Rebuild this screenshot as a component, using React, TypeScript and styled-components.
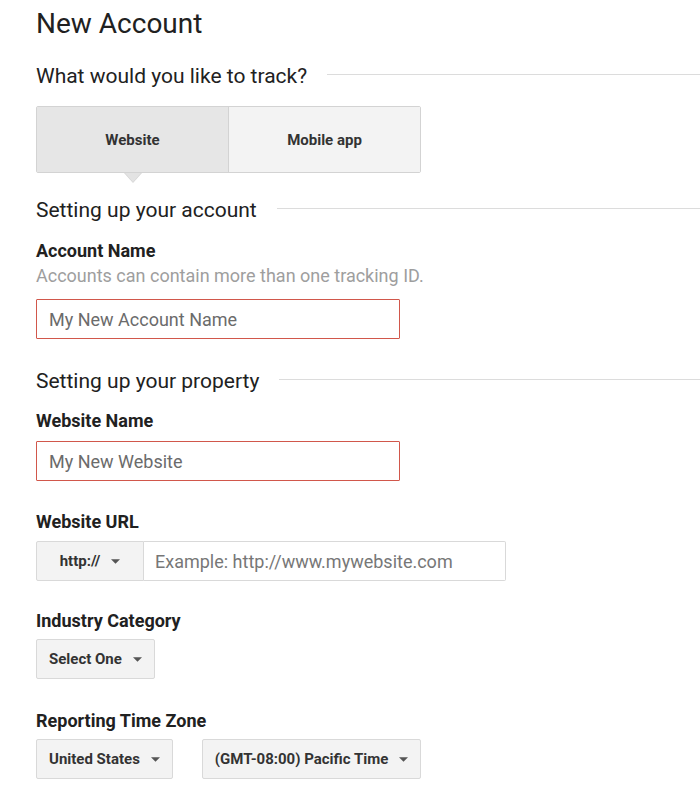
import React from "react";
import styled, { createGlobalStyle } from "styled-components";

const GlobalStyle = createGlobalStyle`
  html, body {
    margin: 0;
    padding: 0;
    background: #ffffff;
  }
  body {
    font-family: Roboto, "Liberation Sans", Arial, sans-serif;
    color: #212121;
  }
  * {
    box-sizing: border-box;
  }
`;

const Caret = () => (
  <CaretIcon viewBox="0 0 10 5" aria-hidden="true">
    <path d="M0 0 L10 0 L5 5 Z" fill="currentColor" />
  </CaretIcon>
);

const App: React.FC = () => {
  return (
    <>
      <GlobalStyle />
      <Page>
        <Title>New Account</Title>

        <SectionHeading $top={24}>
          <span>What would you like to track?</span>
          <Rule />
        </SectionHeading>

        <Toggle>
          <ToggleOption $active>Website</ToggleOption>
          <ToggleOption>Mobile app</ToggleOption>
        </Toggle>

        <SectionHeading $top={25}>
          <span>Setting up your account</span>
          <Rule />
        </SectionHeading>

        <Field $top={19}>
          <Label>Account Name</Label>
          <Help>Accounts can contain more than one tracking ID.</Help>
          <TextInput $invalid placeholder="My New Account Name" $top={13} />
        </Field>

        <SectionHeading $top={30}>
          <span>Setting up your property</span>
          <Rule />
        </SectionHeading>

        <Field $top={18}>
          <Label>Website Name</Label>
          <TextInput $invalid placeholder="My New Website" $top={10} />
        </Field>

        <Field $top={31}>
          <Label>Website URL</Label>
          <UrlGroup>
            <Select $width={108} $center $joined>
              <span>http://</span>
              <Caret />
            </Select>
            <UrlInput placeholder="Example: http://www.mywebsite.com" />
          </UrlGroup>
        </Field>

        <Field $top={30}>
          <Label>Industry Category</Label>
          <Row>
            <Select>
              <span>Select One</span>
              <Caret />
            </Select>
          </Row>
        </Field>

        <Field $top={32}>
          <Label>Reporting Time Zone</Label>
          <Row>
            <Select>
              <span>United States</span>
              <Caret />
            </Select>
            <Select>
              <span>(GMT-08:00) Pacific Time</span>
              <Caret />
            </Select>
          </Row>
        </Field>
      </Page>
    </>
  );
};

const Page = styled.div`
  padding: 8px 0 16px 36px;
  display: flex;
  flex-direction: column;
  align-items: flex-start;
`;

const Title = styled.h1`
  margin: 0;
  font-size: 28px;
  line-height: 32px;
  font-weight: 400;
  color: #212121;
`;

const SectionHeading = styled.h2<{ $top: number }>`
  margin: ${(p) => p.$top}px 0 0 0;
  width: 100%;
  display: flex;
  align-items: center;
  gap: 20px;
  font-size: 21px;
  line-height: 24px;
  font-weight: 400;
  color: #212121;
  white-space: nowrap;
`;

const Rule = styled.div`
  flex: 1;
  height: 1px;
  margin-top: -3px;
  background: #dcdcdc;
`;

const Toggle = styled.div`
  margin-top: 18px;
  display: flex;
  border: 1px solid #d3d3d3;
  border-radius: 2px;
`;

const ToggleOption = styled.div<{ $active?: boolean }>`
  position: relative;
  width: ${(p) => (p.$active ? 192 : 191)}px;
  height: 65px;
  display: flex;
  align-items: center;
  justify-content: center;
  font-size: 15px;
  font-weight: 700;
  color: #333;
  background: ${(p) => (p.$active ? "#e6e6e6" : "#f3f3f3")};
  border-right: ${(p) => (p.$active ? "1px solid #d3d3d3" : "none")};

  ${(p) =>
    p.$active &&
    `
    &::after {
      content: "";
      position: absolute;
      left: 50%;
      bottom: -10px;
      margin-left: -8px;
      border-left: 8px solid transparent;
      border-right: 8px solid transparent;
      border-top: 9px solid #e3e3e3;
    }
    &::before {
      content: "";
      position: absolute;
      left: 50%;
      bottom: -11px;
      margin-left: -9px;
      border-left: 9px solid transparent;
      border-right: 9px solid transparent;
      border-top: 10px solid #d6d6d6;
    }
  `}
`;

const Field = styled.div<{ $top: number }>`
  margin-top: ${(p) => p.$top}px;
  display: flex;
  flex-direction: column;
  align-items: flex-start;
`;

const Label = styled.div`
  font-size: 18px;
  line-height: 20px;
  font-weight: 700;
  color: #212121;
`;

const Help = styled.div`
  margin-top: 5px;
  font-size: 18px;
  line-height: 20px;
  color: #9e9e9e;
`;

const TextInput = styled.input<{ $invalid?: boolean; $top: number }>`
  margin-top: ${(p) => p.$top}px;
  width: 364px;
  height: 40px;
  padding: 0 12px;
  font-family: Roboto, "Liberation Sans", Arial, sans-serif;
  font-size: 18px;
  color: #333;
  background: #fff;
  border: 1.5px solid ${(p) => (p.$invalid ? "#d1574b" : "#d0d0d0")};
  border-radius: 1px;
  outline: none;

  &::placeholder {
    color: #6b6b6b;
  }
`;

const UrlGroup = styled.div`
  margin-top: 9px;
  display: flex;
`;

const Row = styled.div`
  margin-top: 8px;
  display: flex;
  gap: 29px;
`;

const Select = styled.div<{ $width?: number; $center?: boolean; $joined?: boolean }>`
  height: 40px;
  ${(p) => (p.$width ? `width: ${p.$width}px;` : "")}
  padding: 0 12px;
  display: flex;
  align-items: center;
  justify-content: ${(p) => (p.$center ? "center" : "flex-start")};
  gap: 11px;
  font-size: 15px;
  font-weight: 700;
  color: #333;
  background: #f3f3f3;
  border: 1px solid #d9d9d9;
  border-radius: ${(p) => (p.$joined ? "2px 0 0 2px" : "2px")};
  white-space: nowrap;
`;

const CaretIcon = styled.svg`
  width: 9px;
  height: 5px;
  color: #555;
  flex: none;
`;

const UrlInput = styled.input`
  width: 362px;
  height: 40px;
  padding: 0 11px;
  font-family: Roboto, "Liberation Sans", Arial, sans-serif;
  font-size: 18px;
  color: #333;
  background: #fff;
  border: 1px solid #d9d9d9;
  border-left: none;
  border-radius: 0 2px 2px 0;
  outline: none;

  &::placeholder {
    color: #777;
  }
`;

export default App;
